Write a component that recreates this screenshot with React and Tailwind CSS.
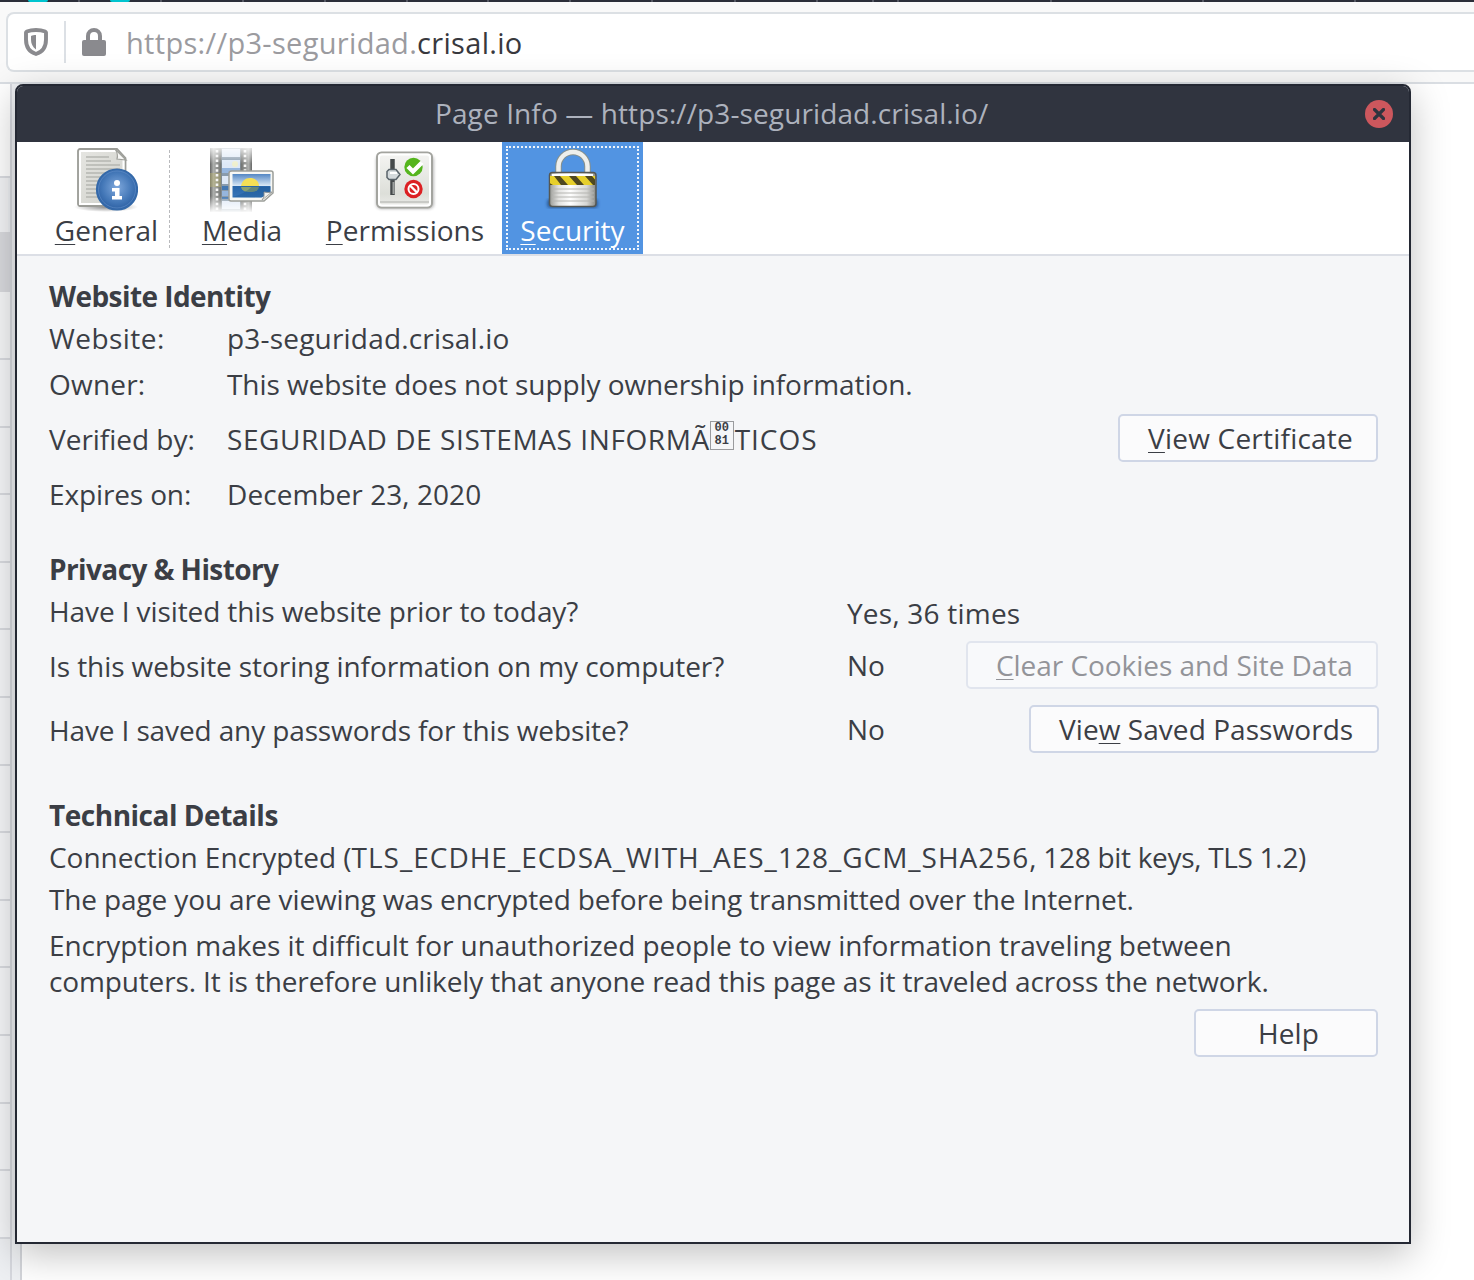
import React from 'react';

const tabTicks = [79, 161, 243, 325, 407, 488, 570, 652, 735, 817, 873, 898, 1051, 1203, 1355];

function Key({ children }) {
  return <span className="underline decoration-1 underline-offset-[3px] [text-decoration-skip-ink:none]">{children}</span>;
}

function ShieldIcon() {
  return (
    <svg className="h-7 w-6 shrink-0" viewBox="0 0 24 28" fill="none">
      <path d="M12 2c3.500 0 6.800.6 9.200 1.500.5.2.8.6.8 1.100v6.900c0 7-3.500 12.500-10 14.500C5.500 24 2 18.500 2 11.500V4.600c0-.5.3-.9.8-1.100C5.200 2.600 8.500 2 12 2Z" stroke="#8a8a8e" strokeWidth="3.900" />
      <path d="M12 7v14.500C8.500 19 7 15.500 7 11.500V8c1.500-.7 3-1 5-1Z" fill="#8a8a8e" />
    </svg>
  );
}

function LockIcon() {
  return (
    <svg className="h-7 w-6 shrink-0" viewBox="0 0 24 28" fill="none">
      <path d="M6 14V8a6 6 0 0 1 12 0v6" stroke="#8a8a8e" strokeWidth="4" />
      <rect x="0" y="12" width="24" height="16" rx="2" fill="#8a8a8e" />
    </svg>
  );
}

function GeneralIcon() {
  return (
    <svg className="size-16" viewBox="0 0 64 64" fill="none">
      <defs>
        <linearGradient id="gp" x1="0" y1="0" x2="1" y2="1"><stop stopColor="#e6e6e2" /><stop offset="1" stopColor="#cfd0ca" /></linearGradient>
        <radialGradient id="gb" cx=".5" cy=".45" r=".6"><stop stopColor="#7fa8dc" /><stop offset=".6" stopColor="#4478b8" /><stop offset="1" stopColor="#25589c" /></radialGradient>
        <radialGradient id="gs"><stop stopColor="#000" stopOpacity=".45" /><stop offset="1" stopColor="#000" stopOpacity="0" /></radialGradient>
      </defs>
      <ellipse cx="32" cy="59" rx="32" ry="5" fill="url(#gs)" />
      <path d="M6 1h37l8.500 9v46a2 2 0 0 1-2 2H6a2 2 0 0 1-2-2V3a2 2 0 0 1 2-2Z" fill="url(#gp)" stroke="#9b9c97" strokeWidth="1.800" />
      <path d="M7 3h35l7.500 8v45H6V4a1 1 0 0 1 1-1Z" stroke="#fff" strokeWidth="2" />
      <path d="M12 9h23M12 13h25M12 17h34M12 21h34M12 25h34M12 29h34M12 33h34M12 37h34M12 41h34M12 45h34M12 49h34" stroke="#b5b6b1" strokeWidth="1.700" />
      <path d="M41 1l11 11-9-1c1-3 0-7-2-10Z" fill="#f8f8f6" stroke="#a0a19c" strokeWidth="1.200" />
      <circle cx="43" cy="41.500" r="20.300" fill="url(#gb)" stroke="#3469a9" strokeWidth="1.600" />
      <circle cx="43" cy="41.500" r="18.500" stroke="#5d8bc6" strokeWidth=".7" />
      <circle cx="43" cy="35" r="3" fill="#fff" />
      <path d="M38 40h7.500v8H48v3.500H38V48h3v-4.500h-3Z" fill="#fff" />
    </svg>
  );
}

function MediaIcon() {
  return (
    <svg className="size-16" viewBox="0 0 64 64" fill="none">
      <defs>
        <linearGradient id="mf" x1="0" y1="0" x2="0" y2="1"><stop stopColor="#fff" stopOpacity=".8" /><stop offset=".25" stopColor="#fff" stopOpacity=".05" /><stop offset=".75" stopColor="#fff" stopOpacity=".05" /><stop offset="1" stopColor="#fff" stopOpacity=".95" /></linearGradient>
        <linearGradient id="ms" x1="0" x2="1"><stop stopColor="#5c5d5c" /><stop offset=".08" stopColor="#a9aba9" /><stop offset=".25" stopColor="#70726f" /><stop offset=".75" stopColor="#6f716f" /><stop offset=".92" stopColor="#a9aba9" /><stop offset="1" stopColor="#5c5d5c" /></linearGradient>
        <linearGradient id="mk" x1="0" y1="0" x2="0" y2="1"><stop stopColor="#5387c4" /><stop offset=".5" stopColor="#d9e8f5" /><stop offset=".52" stopColor="#2866aa" /><stop offset="1" stopColor="#3976b7" /></linearGradient>
      </defs>
      <path d="M0 0h42v64H0Z" fill="url(#ms)" />
      <path d="M11.500 0h19v64h-19Z" fill="#8396a8" />
      <path d="M12 1h18v8H12ZM12 12h18v8H12ZM12 28h18v8H12ZM12 53h18v8H12Z" fill="#dce7f6" />
      <path d="M12 20h18v5H12ZM12 43h18v5H12Z" fill="#91b2dc" />
      <path d="M12 38h18v4H12ZM12 49h18v2H12Z" fill="#3970ad" />
      <circle cx="25" cy="16" r="3" fill="#eeeecb" />
      <path d="M0 25h11v14H0Z" fill="#bbb367" opacity=".4" />
      <path d="M7 2v60M35 2v60" stroke="#f5f5f5" strokeWidth="2.600" strokeDasharray="2.500 2.300" />
      <path d="M0 0h42v64H0Z" fill="url(#mf)" />
      <path d="M22 23h39q2 0 2 2v20l-9 8H21q-2 0-2-2V25q0-2 3-2Z" fill="#f6f7f4" stroke="#9c9e99" strokeWidth="1.500" />
      <path d="M22.500 26h38v19l-9 4.500h-29Z" fill="url(#mk)" />
      <path d="M31 38c1-5 4-8 9-8s9 3 9 8Z" fill="#f4df55" />
      <path d="M31 39h18c-1 4-4 5-9 5s-8-1-9-5Z" fill="#b4b955" opacity=".7" />
      <path d="M22.500 49q12-3 19-10h19v6l-9 4.500Z" fill="#18528f" opacity=".35" />
      <path d="M62 44q-4 1-8 0 1 5-2 8Z" fill="#f1f1ee" stroke="#8f918d" strokeWidth=".8" />
    </svg>
  );
}

function PermissionsIcon() {
  return (
    <svg className="size-16" viewBox="0 0 64 64" fill="none">
      <defs>
        <linearGradient id="pb" x1="0" y1="0" x2="0" y2="1"><stop stopColor="#f5f5f3" /><stop offset=".75" stopColor="#dddfd9" /><stop offset="1" stopColor="#ececea" /></linearGradient>
        <filter id="ps"><feGaussianBlur stdDeviation="1.500" /></filter>
      </defs>
      <rect x="3" y="7" width="58" height="54" rx="5" fill="#777" opacity=".5" filter="url(#ps)" />
      <rect x="4" y="4.500" width="55" height="55" rx="4.500" fill="url(#pb)" stroke="#a3a49f" strokeWidth="2" />
      <rect x="6" y="6.500" width="51" height="51" rx="3" stroke="#fff" strokeWidth="2" />
      <path d="M7 54h49" stroke="#bfc0bc" strokeWidth="1.500" />
      <path d="M19.500 11v36" stroke="#454a4b" strokeWidth="4.500" />
      <path d="M20.500 34v12" stroke="#9ca09e" strokeWidth="2" />
      <path d="M16 21.500h7l4 5-4 5h-7l-2-2v-6Z" fill="#d4dadc" stroke="#59636a" strokeWidth="1.500" />
      <path d="M17 25h7" stroke="#fff" strokeWidth="2" />
      <circle cx="40.500" cy="19" r="9.200" fill="#55b51d" />
      <path d="M35 18.500l5 5 9-9" stroke="#fff" strokeWidth="4.400" />
      <circle cx="40.500" cy="41" r="9.200" fill="#dc2023" />
      <circle cx="40.500" cy="41" r="5" stroke="#fff" strokeWidth="2" />
      <path d="M37 37.500l7 7" stroke="#fff" strokeWidth="2.400" />
    </svg>
  );
}

function SecurityIcon() {
  return (
    <svg className="size-16" viewBox="0 0 64 64" fill="none">
      <defs>
        <linearGradient id="sb" x1="0" x2="1"><stop stopColor="#999a96" /><stop offset=".2" stopColor="#e3e3e1" /><stop offset=".45" stopColor="#fff" /><stop offset=".8" stopColor="#d6d6d3" /><stop offset="1" stopColor="#888985" /></linearGradient>
        <clipPath id="sc"><path d="M9 28h45v9H9Z" /></clipPath>
        <filter id="ss"><feGaussianBlur stdDeviation="1.800" /></filter>
      </defs>
      <rect x="6" y="51" width="51" height="9" rx="3" fill="#173d70" opacity=".6" filter="url(#ss)" />
      <path d="M17.500 27V18.500a14.500 14.500 0 0 1 29 0V27" stroke="#85908e" strokeWidth="6.500" />
      <path d="M17.500 27V18.500a14.500 14.500 0 0 1 29 0V27" stroke="#eeefec" strokeWidth="4.500" />
      <rect x="8.500" y="24.500" width="46.500" height="34" rx="3" fill="url(#sb)" stroke="#555753" strokeWidth="1.500" />
      <path d="M11 27h41" stroke="#fff" strokeWidth="2" />
      <g clipPath="url(#sc)">
        <path d="M9 28h45v9H9Z" fill="#e6cf2b" />
        <path d="M13 28h6l8 9h-7ZM28 28h7l8 9h-7ZM44 28h7l8 9h-7ZM4 32l8 5H4Z" fill="#4f4820" />
      </g>
      <path d="M11 41h42M11 45h42M11 49h42M11 53h42" stroke="#b5b6b2" strokeWidth="1.200" />
    </svg>
  );
}

function ToolItem({ icon, first, rest, tracking, className, text = 'text-[#3b3e45]' }) {
  return (
    <div className={`flex h-[112px] shrink-0 flex-col items-center pt-[6px] ${className}`}>
      {icon}
      <div className={`h-9 text-[28px] leading-9 whitespace-nowrap ${text} ${tracking}`}>
        <Key>{first}</Key>{rest}
      </div>
    </div>
  );
}

function Button({ children, className, disabled }) {
  return (
    <button
      className={`mb-[2px] ml-auto flex h-12 shrink-0 items-center rounded-[5px] border-2 whitespace-nowrap ${disabled ? 'border-[#e1e5ee] bg-[#f8f9fb] text-[#939499]' : 'border-[#cfd6e6] bg-[#fbfbfc]'} ${className}`}
    >
      {children}
    </button>
  );
}

function Row({ label, labelClass, className, children }) {
  return (
    <div className={`flex items-center whitespace-nowrap ${className}`}>
      <span className={`shrink-0 ${labelClass}`}>{label}</span>
      {children}
    </div>
  );
}

function Sidebar() {
  return (
    <div className="flex h-[1196px] w-[22px] border-r-2 border-[#d3d5da] bg-[#eef0f3]">
      <div className="w-3 border-r-2 border-[#d6d8de]">
        <div className="h-[94px] border-b-2 border-[#dadce1] bg-white" />
        <div className="mr-0.5 h-[54px] bg-[#f3f4f6]" />
        <div className="h-[60px] bg-[#d9dade]" />
        <div className="h-[68px] border-b-2 border-[#d9dbe0] bg-[#f6f7f8]" />
        {Array.from({ length: 13 }, (_, i) => (
          <div key={i} className="h-[67.600px] border-b-2 border-[#d9dbe0] bg-[#f6f7f9]" />
        ))}
      </div>
    </div>
  );
}

export default function App() {
  return (
    <div className="relative h-[1280px] w-[1474px] overflow-hidden bg-white font-['Open_Sans',sans-serif] text-[28px] leading-9 text-[#3b3e45]">
      <div className="relative h-0.5 bg-[#2b2e39]">
        {tabTicks.map((x) => (
          <span key={x} className="absolute top-0 h-0.5 w-0.5 bg-[#555863]" style={{ left: x - 1 }} />
        ))}
        <span className="absolute top-0 left-[28px] h-0.5 w-5 rounded-b-full bg-[#00c4cf]" />
        <span className="absolute top-0 left-[110px] h-0.5 w-5 rounded-b-full bg-[#00c4cf]" />
      </div>
      <div className="h-[82px] border-b-2 border-[#dadee3] bg-[#f9f9f9] pt-[10px] pl-[6px]">
        <div className="flex h-[60px] items-center rounded-l-[8px] border-2 border-r-0 border-[#dce0e4] bg-white pl-4">
          <ShieldIcon />
          <div className="mx-4 h-[42px] w-0.5 bg-[#dce0e5]" />
          <LockIcon />
          <div className="ml-5 pt-[2px] text-[29px] tracking-[0.310px] whitespace-nowrap text-[#38383d]">
            <span className="text-[#9b9b9f]">https://p3-seguridad.</span>crisal.io
          </div>
        </div>
      </div>
      <Sidebar />

      <div className="absolute top-[84px] left-[15px] h-[1160px] w-[1396px] rounded-t-[8px] border-2 border-[#242833] bg-[#f5f6f8] shadow-[0_10px_38px_rgba(0,0,0,0.25)]">
        <div className="flex h-14 items-center rounded-t-[6px] bg-[#30343f] pr-4 pl-[418px]">
          <div className="pb-[2px] tracking-[0.110px] whitespace-nowrap text-[#adb2bd]">Page Info — https://p3-seguridad.crisal.io/</div>
          <div className="ml-auto flex size-7 items-center justify-center rounded-full bg-[#cc575d]">
            <svg className="size-3" viewBox="0 0 12 12">
              <path d="M1.500 1.500l9 9m0-9l-9 9" stroke="#2f343f" strokeWidth="3.200" strokeLinecap="round" />
            </svg>
          </div>
        </div>

        <div className="flex h-[114px] border-b-2 border-[#dcdfe6] bg-white pl-[26px]">
          <div className="flex">
            <ToolItem icon={<GeneralIcon />} first="G" rest="eneral" tracking="pl-px tracking-[0.050px]" className="w-[126px]" />
            <div className="mt-2 h-[98px] border-r border-dashed border-[#b9babd]" />
          </div>
          <ToolItem icon={<MediaIcon />} first="M" rest="edia" tracking="tracking-[-0.100px]" className="ml-3 w-[120px]" />
          <ToolItem icon={<PermissionsIcon />} first="P" rest="ermissions" tracking="tracking-[0.020px]" className="ml-1.5 w-[194px]" />
          <div className="relative w-[141px] bg-[#5294e2]">
            <ToolItem icon={<SecurityIcon />} first="S" rest="ecurity" tracking="tracking-[0.020px]" text="text-white" className="w-full" />
            <div className="absolute inset-1 border-2 border-dotted border-white/90" />
          </div>
        </div>

        <div className="pt-[22px] pr-[31px] pl-8">
          <h2 className="h-9 font-bold tracking-[-0.570px] whitespace-nowrap">Website Identity</h2>
          <Row label="Website:" labelClass="w-[178px] tracking-[0.450px]" className="h-12">
            <span className="tracking-[0.190px]">p3-seguridad.crisal.io</span>
          </Row>
          <Row label="Owner:" labelClass="w-[178px] tracking-[0.200px]" className="h-11">
            <span className="tracking-[-0.080px]">This website does not supply ownership information.</span>
          </Row>
          <Row label="Verified by:" labelClass="w-[178px] tracking-[-0.020px]" className="h-[66px]">
            <span className="tracking-[0.580px]">SEGURIDAD DE SISTEMAS INFORMÃ</span>
            <span className="mb-[8px] flex h-[29px] w-6 shrink-0 flex-col items-center justify-center border border-[#9a9b9e] font-['Liberation_Mono',monospace] text-[12px] leading-[13px] font-bold">
              <span>00</span>
              <span>81</span>
            </span>
            <span className="ml-px tracking-[0.950px]">TICOS</span>
            <Button className="w-[260px] pl-7 tracking-[0.220px]"><Key>V</Key>iew Certificate</Button>
          </Row>
          <Row label="Expires on:" labelClass="w-[178px] tracking-[-0.130px]" className="h-11">
            <span className="tracking-[0.060px]">December 23, 2020</span>
          </Row>

          <h2 className="mt-[37px] h-8 leading-8 font-bold tracking-[-0.600px] whitespace-nowrap">Privacy &amp; History</h2>
          <Row label="Have I visited this website prior to today?" labelClass="w-[798px] tracking-[-0.100px]" className="h-[52px]">
            <span className="pt-[4px] tracking-[0.220px]">Yes, 36 times</span>
          </Row>
          <Row label="Is this website storing information on my computer?" labelClass="w-[798px] tracking-[-0.085px]" className="h-[58px]">
            <span className="pb-[2px]">No</span>
            <Button disabled className="w-[412px] pl-7 tracking-[-0.050px]"><Key>C</Key>lear Cookies and Site Data</Button>
          </Row>
          <Row label="Have I saved any passwords for this website?" labelClass="w-[798px] tracking-[-0.125px]" className="h-[70px]">
            <span className="pb-[2px]">No</span>
            <Button className="-mr-px w-[350px] pl-7 tracking-[0.060px]">Vie<Key>w</Key>&nbsp;Saved Passwords</Button>
          </Row>

          <h2 className="mt-8 h-9 font-bold tracking-[-0.480px] whitespace-nowrap">Technical Details</h2>
          <p className="h-12 leading-[48px] whitespace-nowrap">
            <span className="tracking-[-0.040px]">Connection Encrypted (</span>
            <span className="tracking-[1.000px]">TLS_ECDHE_ECDSA_WITH_AES_128_GCM_SHA256</span>
            <span className="tracking-[-0.300px]">, 128 bit keys, TLS 1.2)</span>
          </p>
          <p className="tracking-[-0.130px] whitespace-nowrap">The page you are viewing was encrypted before being transmitted over the Internet.</p>
          <p className="mt-2.5 whitespace-nowrap">
            <span className="block tracking-[-0.070px]">Encryption makes it difficult for unauthorized people to view information traveling between</span>
            <span className="block tracking-[-0.145px]">computers. It is therefore unlikely that anyone read this page as it traveled across the network.</span>
          </p>
          <div className="mt-2.5 flex">
            <Button className="w-[184px] justify-center pl-[5px] tracking-[0.150px]">Help</Button>
          </div>
        </div>
      </div>
    </div>
  );
}
